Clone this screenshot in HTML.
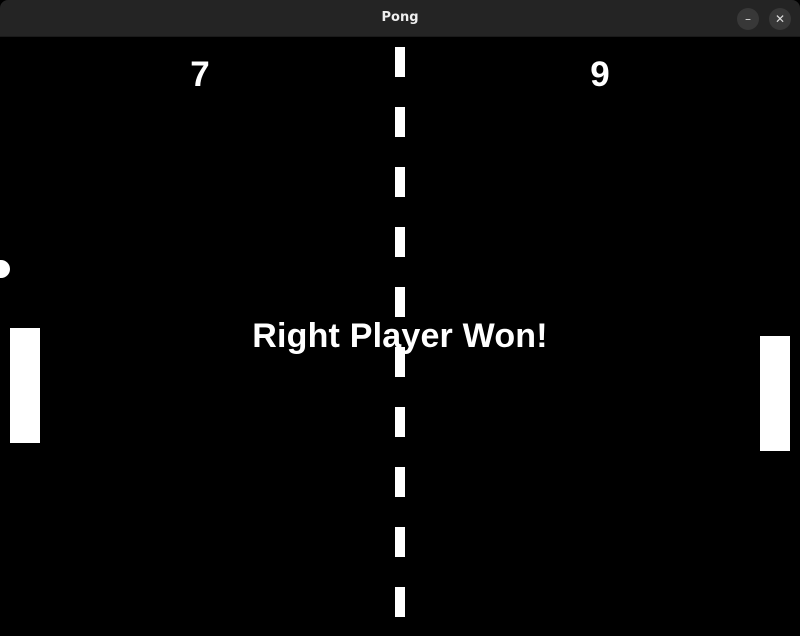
<!DOCTYPE html>
<html><head><style>
body{margin:0;width:800px;height:636px;background:#000;overflow:hidden;position:relative;font-family:"Liberation Sans",sans-serif}
.tb{position:absolute;left:0;top:0;width:800px;height:36px;background:#242424;border-radius:8px 8px 0 0;border-bottom:1px solid #1a1a1a}
.t{position:absolute;top:10px;width:800px;text-align:center;color:#eee;font-weight:bold;font-size:13px;font-family:"DejaVu Sans",sans-serif}
.btn{position:absolute;top:8px;width:22px;height:22px;border-radius:50%;background:#383838;color:#ddd;font-size:12px;text-align:center;line-height:22px;font-family:"DejaVu Sans",sans-serif}
.d{position:absolute;left:395px;width:10px;height:30px;background:#fff}
.r{position:absolute;background:#fff}
.s{position:absolute;color:#fff;font-weight:bold;font-size:35px;line-height:1}
</style></head><body>
<div class="tb"><div class="t">Pong</div>
<div class="btn" style="left:737px">–</div><div class="btn" style="left:769px">✕</div></div>
<div class="d" style="top:47px"></div><div class="d" style="top:107px"></div><div class="d" style="top:167px"></div><div class="d" style="top:227px"></div><div class="d" style="top:287px"></div><div class="d" style="top:347px"></div><div class="d" style="top:407px"></div><div class="d" style="top:467px"></div><div class="d" style="top:527px"></div><div class="d" style="top:587px"></div>
<div class="r" style="left:10px;top:328px;width:30px;height:115px"></div>
<div class="r" style="left:760px;top:336px;width:30px;height:115px"></div>
<div class="r" style="left:-8px;top:260px;width:18px;height:18px;border-radius:50%"></div>
<div class="s" style="left:180px;top:57px;width:40px;text-align:center">7</div>
<div class="s" style="left:580px;top:57px;width:40px;text-align:center">9</div>
<div class="s" style="left:0;top:319px;width:800px;text-align:center;font-size:34px;letter-spacing:0.2px">Right Player Won!</div>
</body></html>
